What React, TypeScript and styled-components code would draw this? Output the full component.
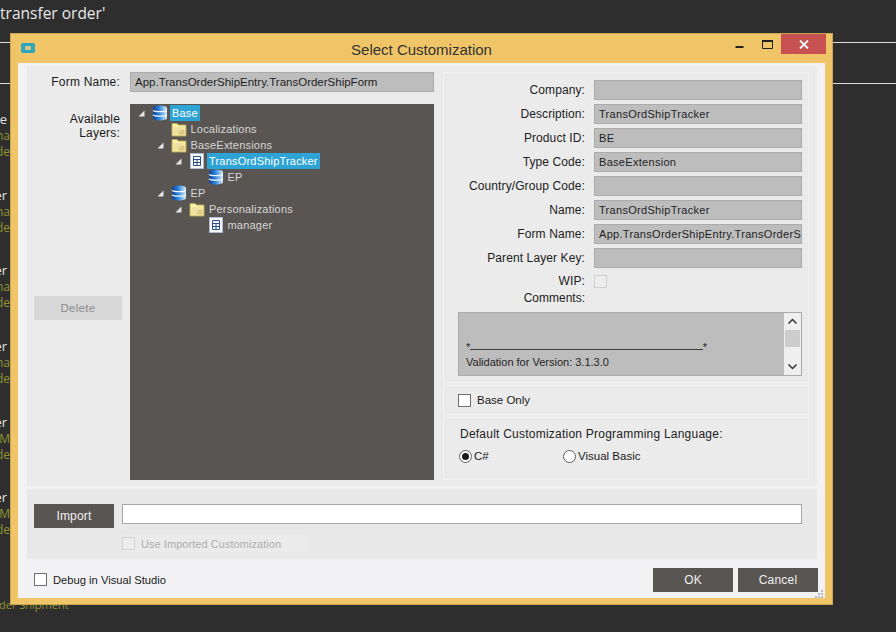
import React from "react";
import styled, { createGlobalStyle } from "styled-components";

const GlobalStyle = createGlobalStyle`
  html, body {
    margin: 0;
    padding: 0;
    width: 896px;
    height: 632px;
    overflow: hidden;
    background: #2e2e2e;
  }
  * {
    box-sizing: border-box;
  }
`;

const Page = styled.div`
  position: relative;
  width: 896px;
  height: 632px;
  background: #2e2e2e;
  overflow: hidden;
  font-family: "Liberation Sans", Arial, sans-serif;
  font-size: 12px;
  color: #1a1a1a;
`;

const SearchTitle = styled.div`
  height: 42px;
  margin-left: -81px;
  padding-top: 3px;
  font-family: "Open Sans", sans-serif;
  font-size: 15.5px;
  line-height: 21px;
  color: #e8e8e8;
  white-space: nowrap;
`;

const Rule = styled.div`
  height: 1px;
  background: #dddddd;
`;

const RuleGap = styled.div`
  height: 40px;
`;

const ResultList = styled.div`
  padding-top: 27px;
  margin-left: -60px;
  font-family: "Open Sans", sans-serif;
  white-space: nowrap;
`;

const Result = styled.div`
  width: 130px;
  height: 75.7px;
  text-align: right;
`;

const ResultTitle = styled.div`
  height: 17px;
  padding-right: 63px;
  font-size: 13px;
  line-height: 17px;
  color: #e6e6e6;
`;

const ResultLine = styled.div`
  height: 16px;
  font-size: 12px;
  line-height: 16px;
  color: #92922e;
  padding-right: 60px;
`;

const LastLine = styled.div`
  height: 16px;
  padding-left: 59px;
  font-size: 11px;
  line-height: 14px;
  color: #92922e;
`;

const Dialog = styled.div`
  position: absolute;
  left: 10px;
  top: 33px;
  width: 823px;
  height: 572px;
  background: #efc568;
  border: 1px solid #c9a653;
  display: flex;
  flex-direction: column;
  padding: 0 7px 6px 7px;
`;

const TitleBar = styled.div`
  position: relative;
  height: 29px;
  flex: none;
  display: flex;
  align-items: center;
  justify-content: center;
`;

const AppIcon = styled.svg`
  position: absolute;
  left: 3px;
  top: 9px;
`;

const TitleText = styled.div`
  font-size: 15px;
  color: #333333;
  padding-top: 1px;
`;

const WindowButtons = styled.div`
  position: absolute;
  right: -1px;
  top: 0;
  display: flex;
  align-items: flex-start;
`;

const WindowButton = styled.div`
  width: 28px;
  height: 20px;
  display: flex;
  align-items: center;
  justify-content: center;
`;

const CloseButton = styled.div`
  width: 45px;
  height: 20px;
  background: #c75050;
  display: flex;
  align-items: center;
  justify-content: center;
`;

const Client = styled.div`
  flex: 1;
  background: #f2f2f5;
  padding: 3px 8px 0 9px;
  display: flex;
  flex-direction: column;
  min-height: 0;
`;

const Upper = styled.div`
  height: 420px;
  flex: none;
  background: #ebebeb;
  display: flex;
  padding: 4px 8px 6px 0;
`;

const LeftPane = styled.div`
  width: 407px;
  flex: none;
  display: flex;
  flex-direction: column;
  padding: 2px 0 0 7px;
`;

const FormNameRow = styled.div`
  display: flex;
  align-items: center;
  gap: 10px;
  height: 20px;
  flex: none;
`;

const SideLabel = styled.div`
  width: 86px;
  text-align: right;
  flex: none;
  line-height: 14px;
  letter-spacing: 0.2px;
`;

const ReadOnly = styled.div`
  flex: 1;
  height: 20px;
  background: #bdbdbd;
  border: 1px solid #ababab;
  padding-left: 4px;
  line-height: 18px;
  font-size: 11.5px;
  color: #1f1f1f;
  overflow: hidden;
  white-space: nowrap;
`;

const LayersRow = styled.div`
  display: flex;
  gap: 10px;
  flex: 1;
  margin-top: 12px;
  min-height: 0;
`;

const LayersSide = styled.div`
  width: 86px;
  flex: none;
  padding-top: 8px;
  display: flex;
  flex-direction: column;
`;

const DeleteButton = styled.div`
  width: 88px;
  height: 24px;
  margin-top: 156px;
  background: #d7d7d7;
  color: #8c8c8c;
  font-size: 11.5px;
  line-height: 24px;
  text-align: center;
  letter-spacing: 0.3px;
`;

const Tree = styled.div`
  flex: 1;
  background: #595552;
  padding-top: 1px;
  color: #d6d6d6;
  font-size: 11px;
  letter-spacing: 0.2px;
`;

const TreeRow = styled.div<{ $depth: number }>`
  height: 16px;
  display: flex;
  align-items: center;
  padding-left: ${(p) => 8 + p.$depth * 18.5}px;
`;

const Twisty = styled.svg`
  width: 7px;
  height: 7px;
  flex: none;
  margin-right: 7px;
`;

const TwistySpace = styled.span`
  width: 14px;
  flex: none;
`;

const NodeIcon = styled.svg`
  width: 16px;
  height: 16px;
  flex: none;
  margin-right: 2px;
`;

const NodeLabel = styled.span<{ $selected?: boolean }>`
  height: 16px;
  line-height: 16px;
  padding: 0 2px;
  background: ${(p) => (p.$selected ? "#2ea3d5" : "transparent")};
  color: ${(p) => (p.$selected ? "#ffffff" : "#d6d6d6")};
  white-space: nowrap;
`;

const RightPane = styled.div`
  flex: 1;
  display: flex;
  flex-direction: column;
  gap: 2px;
  min-width: 0;
  margin: 2px 0 0 9px;
`;

const DetailsCard = styled.div`
  height: 311px;
  flex: none;
  background: #ebebeb;
  border: 1px solid #f2f2f2;
  padding: 5px 6px 0 14px;
`;

const FieldRow = styled.div`
  display: flex;
  align-items: center;
  height: 24px;
  gap: 9px;
`;

const WipRow = styled(FieldRow)`
  height: 22px;
`;

const FieldLabel = styled.div`
  flex: 1;
  text-align: right;
  white-space: nowrap;
  color: #222222;
  letter-spacing: 0.1px;
`;

const FieldValue = styled.div`
  width: 208px;
  flex: none;
  height: 20px;
  background: #bdbdbd;
  border: 1px solid #ababab;
  padding-left: 4px;
  line-height: 18px;
  font-size: 11px;
  color: #1f1f1f;
  letter-spacing: 0.3px;
  overflow: hidden;
  white-space: nowrap;
`;

const WipBox = styled.div`
  width: 208px;
  flex: none;
  height: 20px;
  display: flex;
  align-items: center;
`;

const WipCheck = styled.div`
  width: 13px;
  height: 13px;
  background: #ededed;
  border: 1px solid #cfcfcf;
`;

const CommentsLabel = styled.div`
  width: 127px;
  text-align: right;
  height: 20px;
  line-height: 20px;
  margin-top: -4px;
  color: #222222;
`;

const CommentsBox = styled.div`
  height: 64px;
  margin-top: 4px;
  background: #bdbdbd;
  border: 1px solid #ababab;
  display: flex;
`;

const CommentsText = styled.div`
  flex: 1;
  min-width: 0;
  padding: 27px 0 0 7px;
  font-size: 11px;
  line-height: 15px;
  color: #242424;
  overflow: hidden;
  white-space: nowrap;
`;

const DashLine = styled.div`
  display: flex;
  align-items: center;
  width: 241px;
`;

const DashFill = styled.span`
  flex: 1;
  height: 0;
  margin-top: 4px;
  border-top: 1px solid #3c3c3c;
`;

const ScrollBar = styled.div`
  width: 17px;
  flex: none;
  background: #efefef;
  display: flex;
  flex-direction: column;
  align-items: center;
`;

const ScrollArrow = styled.svg`
  width: 17px;
  height: 17px;
  flex: none;
`;

const ScrollThumb = styled.div`
  width: 15px;
  height: 17px;
  background: #cdcdcd;
`;

const ScrollGap = styled.div`
  flex: 1;
`;

const OptionCard = styled.div`
  height: 30px;
  flex: none;
  background: #ebebeb;
  border: 1px solid #f2f2f2;
  padding-left: 14px;
  display: flex;
  align-items: center;
  gap: 6px;
  font-size: 11.5px;
`;

const Check = styled.div`
  width: 13px;
  height: 13px;
  flex: none;
  background: #ffffff;
  border: 1px solid #6f6f6f;
`;

const LanguageCard = styled.div`
  flex: 1;
  background: #ebebeb;
  border: 1px solid #f2f2f2;
  padding: 8px 0 0 16px;
`;

const LanguageTitle = styled.div`
  line-height: 17px;
  color: #222222;
  letter-spacing: 0.23px;
`;

const RadioRow = styled.div`
  display: flex;
  margin: 5px 0 0 -1px;
`;

const RadioOption = styled.div<{ $width: number }>`
  display: flex;
  align-items: center;
  width: ${(p) => p.$width}px;
  height: 16px;
  color: #222222;
  font-size: 11.5px;
`;

const Radio = styled.div<{ $on?: boolean }>`
  width: 13px;
  height: 13px;
  flex: none;
  margin-right: 2px;
  border-radius: 50%;
  border: 1px solid #5f5f5f;
  background: #ffffff;
  display: flex;
  align-items: center;
  justify-content: center;
  &::after {
    content: "";
    display: ${(p) => (p.$on ? "block" : "none")};
    width: 7px;
    height: 7px;
    border-radius: 50%;
    background: #1a1a1a;
  }
`;

const ImportPanel = styled.div`
  height: 70px;
  flex: none;
  margin-top: 3px;
  background: #e8e8e8;
  padding: 15px 15px 0 7px;
`;

const ImportRow = styled.div`
  display: flex;
  gap: 8px;
  align-items: flex-start;
`;

const DarkButton = styled.div<{ $width: number }>`
  width: ${(p) => p.$width}px;
  height: 24px;
  flex: none;
  background: #595552;
  color: #f0f0f0;
  text-align: center;
  line-height: 24px;
  font-size: 12px;
  letter-spacing: 0.2px;
`;

const PathInput = styled.div`
  flex: 1;
  height: 20px;
  background: #ffffff;
  border: 1px solid #a6a6a6;
`;

const UseImported = styled.div`
  display: flex;
  align-items: center;
  width: 184px;
  height: 17px;
  margin: 7px 0 0 88px;
  background: #ebebeb;
  color: #adadad;
  font-size: 11px;
  letter-spacing: 0.05px;
  gap: 6px;
`;

const MutedCheck = styled.div`
  width: 13px;
  height: 13px;
  flex: none;
  background: #ededed;
  border: 1px solid #d2d2d2;
`;

const Footer = styled.div`
  flex: 1;
  display: flex;
  align-items: flex-start;
  justify-content: space-between;
  padding: 9px 0 0 7px;
  margin-right: -1px;
  position: relative;
`;

const DebugOption = styled.div`
  display: flex;
  align-items: center;
  height: 23px;
  gap: 6px;
  font-size: 11.2px;
  color: #1a1a1a;
`;

const FooterButtons = styled.div`
  display: flex;
  gap: 5px;
`;

const Grip = styled.svg`
  position: absolute;
  right: -6px;
  bottom: -1px;
`;

const DbIcon = () => (
  <NodeIcon viewBox="0 0 16 16">
    <defs>
      <linearGradient id="db" x1="0" x2="1" y1="0" y2="0">
        <stop offset="0" stopColor="#123f8f" />
        <stop offset="0.45" stopColor="#2c86dc" />
        <stop offset="1" stopColor="#dcecf8" />
      </linearGradient>
    </defs>
    <path d="M1 3c0-1.500 3-2.500 7-2.500s7 1 7 2.500v10c0 1.500-3 2.500-7 2.500s-7-1-7-2.500z" fill="url(#db)" />
    <path d="M1 5.500c2 1.500 12 1.500 14 0M1 10c2 1.500 12 1.500 14 0" stroke="#f2f7fb" strokeWidth="1.300" fill="none" />
  </NodeIcon>
);

const FolderIcon = () => (
  <NodeIcon viewBox="0 0 16 16">
    <path d="M1 2.500h5l1.500 1.500h7.500v11h-14z" fill="#fbf3a8" stroke="#b8a454" />
    <path d="M2.500 6h11v7.500h-11z" fill="#efe0a0" />
    <path d="M9 9h4.500v4.500h-6z" fill="#dcc88a" />
  </NodeIcon>
);

const DocIcon = () => (
  <NodeIcon viewBox="0 0 16 16">
    <path d="M1.500 0.500h13v15h-13z" fill="#f7f9fd" stroke="#aebbd2" />
    <path d="M4.500 3.500h7v9h-7z" fill="none" stroke="#2b4c86" />
    <path d="M4.500 6.500h7M4.500 9.500h7M8 6.500v6" stroke="#2b4c86" />
  </NodeIcon>
);

const Arrow = () => (
  <Twisty viewBox="0 0 7 7">
    <path d="M6.500 0.500v6h-6z" fill="#e4e4e4" />
  </Twisty>
);

type Node = {
  depth: number;
  label: string;
  kind: "db" | "folder" | "doc";
  open?: boolean;
  selected?: boolean;
};

const nodes: Node[] = [
  { depth: 0, label: "Base", kind: "db", open: true, selected: true },
  { depth: 1, label: "Localizations", kind: "folder" },
  { depth: 1, label: "BaseExtensions", kind: "folder", open: true },
  { depth: 2, label: "TransOrdShipTracker", kind: "doc", open: true, selected: true },
  { depth: 3, label: "EP", kind: "db" },
  { depth: 1, label: "EP", kind: "db", open: true },
  { depth: 2, label: "Personalizations", kind: "folder", open: true },
  { depth: 3, label: "manager", kind: "doc" },
];

const fields = [
  { label: "Company:", value: "" },
  { label: "Description:", value: "TransOrdShipTracker" },
  { label: "Product ID:", value: "BE" },
  { label: "Type Code:", value: "BaseExtension" },
  { label: "Country/Group Code:", value: "" },
  { label: "Name:", value: "TransOrdShipTracker" },
  { label: "Form Name:", value: "App.TransOrderShipEntry.TransOrderS" },
  { label: "Parent Layer Key:", value: "" },
];

const results = [
  { title: "e", lines: ["ana", "de"] },
  { title: "er", lines: ["ana", "de"] },
  { title: "er", lines: ["ana", "de"] },
  { title: "er", lines: ["ana", "de"] },
  { title: "er", lines: ["M", "de"] },
  { title: "er", lines: ["M", "de"] },
];

const App = () => {
  return (
    <Page>
      <GlobalStyle />
      <SearchTitle>results for 'transfer order'</SearchTitle>
      <Rule />
      <RuleGap />
      <Rule />
      <ResultList>
        {results.map((r, i) => (
          <Result key={i}>
            <ResultTitle>{r.title}</ResultTitle>
            {r.lines.map((l) => (
              <ResultLine key={l}>{l}</ResultLine>
            ))}
          </Result>
        ))}
        <ResultTitle>er</ResultTitle>
        <ResultLine>M</ResultLine>
        <LastLine>der Shipment</LastLine>
      </ResultList>

      <Dialog>
        <TitleBar>
          <AppIcon width="14" height="10" viewBox="0 0 14 10">
            <rect width="14" height="10" rx="2" fill="#2aa6b8" />
            <rect x="4" y="3" width="6" height="4" fill="#d8c58a" />
          </AppIcon>
          <TitleText>Select Customization</TitleText>
          <WindowButtons>
            <WindowButton>
              <svg width="9" height="9" viewBox="0 0 9 9">
                <rect x="0.500" y="6" width="8" height="2" fill="#222" />
              </svg>
            </WindowButton>
            <WindowButton>
              <svg width="11" height="9" viewBox="0 0 11 9">
                <path d="M0.500 1.500h10v7h-10z" fill="none" stroke="#222" />
                <path d="M0 1h11" stroke="#222" strokeWidth="2" />
              </svg>
            </WindowButton>
            <CloseButton>
              <svg width="10" height="9" viewBox="0 0 10 9">
                <path d="M1 0.500l8 8M9 0.500l-8 8" stroke="#fff" strokeWidth="1.800" />
              </svg>
            </CloseButton>
          </WindowButtons>
        </TitleBar>
        <Client>
          <Upper>
            <LeftPane>
              <FormNameRow>
                <SideLabel>Form Name:</SideLabel>
                <ReadOnly>App.TransOrderShipEntry.TransOrderShipForm</ReadOnly>
              </FormNameRow>
              <LayersRow>
                <LayersSide>
                  <SideLabel>
                    Available
                    <br />
                    Layers:
                  </SideLabel>
                  <DeleteButton>Delete</DeleteButton>
                </LayersSide>
                <Tree>
                  {nodes.map((n, i) => (
                    <TreeRow key={i} $depth={n.depth}>
                      {n.open ? <Arrow /> : <TwistySpace />}
                      {n.kind === "db" && <DbIcon />}
                      {n.kind === "folder" && <FolderIcon />}
                      {n.kind === "doc" && <DocIcon />}
                      <NodeLabel $selected={n.selected}>{n.label}</NodeLabel>
                    </TreeRow>
                  ))}
                </Tree>
              </LayersRow>
            </LeftPane>
            <RightPane>
              <DetailsCard>
                {fields.map((f) => (
                  <FieldRow key={f.label}>
                    <FieldLabel>{f.label}</FieldLabel>
                    <FieldValue>{f.value}</FieldValue>
                  </FieldRow>
                ))}
                <WipRow>
                  <FieldLabel>WIP:</FieldLabel>
                  <WipBox>
                    <WipCheck />
                  </WipBox>
                </WipRow>
                <CommentsLabel>Comments:</CommentsLabel>
                <CommentsBox>
                  <CommentsText>
                    <DashLine>
                      *<DashFill />*
                    </DashLine>
                    Validation for Version: 3.1.3.0
                  </CommentsText>
                  <ScrollBar>
                    <ScrollArrow viewBox="0 0 17 17">
                      <path d="M4.500 10.500l4-4 4 4" fill="none" stroke="#333" strokeWidth="1.500" />
                    </ScrollArrow>
                    <ScrollThumb />
                    <ScrollGap />
                    <ScrollArrow viewBox="0 0 17 17">
                      <path d="M4.500 6.500l4 4 4-4" fill="none" stroke="#333" strokeWidth="1.500" />
                    </ScrollArrow>
                  </ScrollBar>
                </CommentsBox>
              </DetailsCard>
              <OptionCard>
                <Check />
                <span>Base Only</span>
              </OptionCard>
              <LanguageCard>
                <LanguageTitle>Default Customization Programming Language:</LanguageTitle>
                <RadioRow>
                  <RadioOption $width={104}>
                    <Radio $on />
                    C#
                  </RadioOption>
                  <RadioOption $width={120}>
                    <Radio />
                    Visual Basic
                  </RadioOption>
                </RadioRow>
              </LanguageCard>
            </RightPane>
          </Upper>
          <ImportPanel>
            <ImportRow>
              <DarkButton $width={80}>Import</DarkButton>
              <PathInput />
            </ImportRow>
            <UseImported>
              <MutedCheck />
              Use Imported Customization
            </UseImported>
          </ImportPanel>
          <Footer>
            <DebugOption>
              <Check />
              Debug in Visual Studio
            </DebugOption>
            <FooterButtons>
              <DarkButton $width={80}>OK</DarkButton>
              <DarkButton $width={80}>Cancel</DarkButton>
            </FooterButtons>
            <Grip width="10" height="10" viewBox="0 0 10 10">
              <path d="M7 1h2v2h-2zM4 4h2v2h-2zM7 4h2v2h-2zM1 7h2v2h-2zM4 7h2v2h-2zM7 7h2v2h-2z" fill="#b9b9c0" />
            </Grip>
          </Footer>
        </Client>
      </Dialog>
    </Page>
  );
};

export default App;
